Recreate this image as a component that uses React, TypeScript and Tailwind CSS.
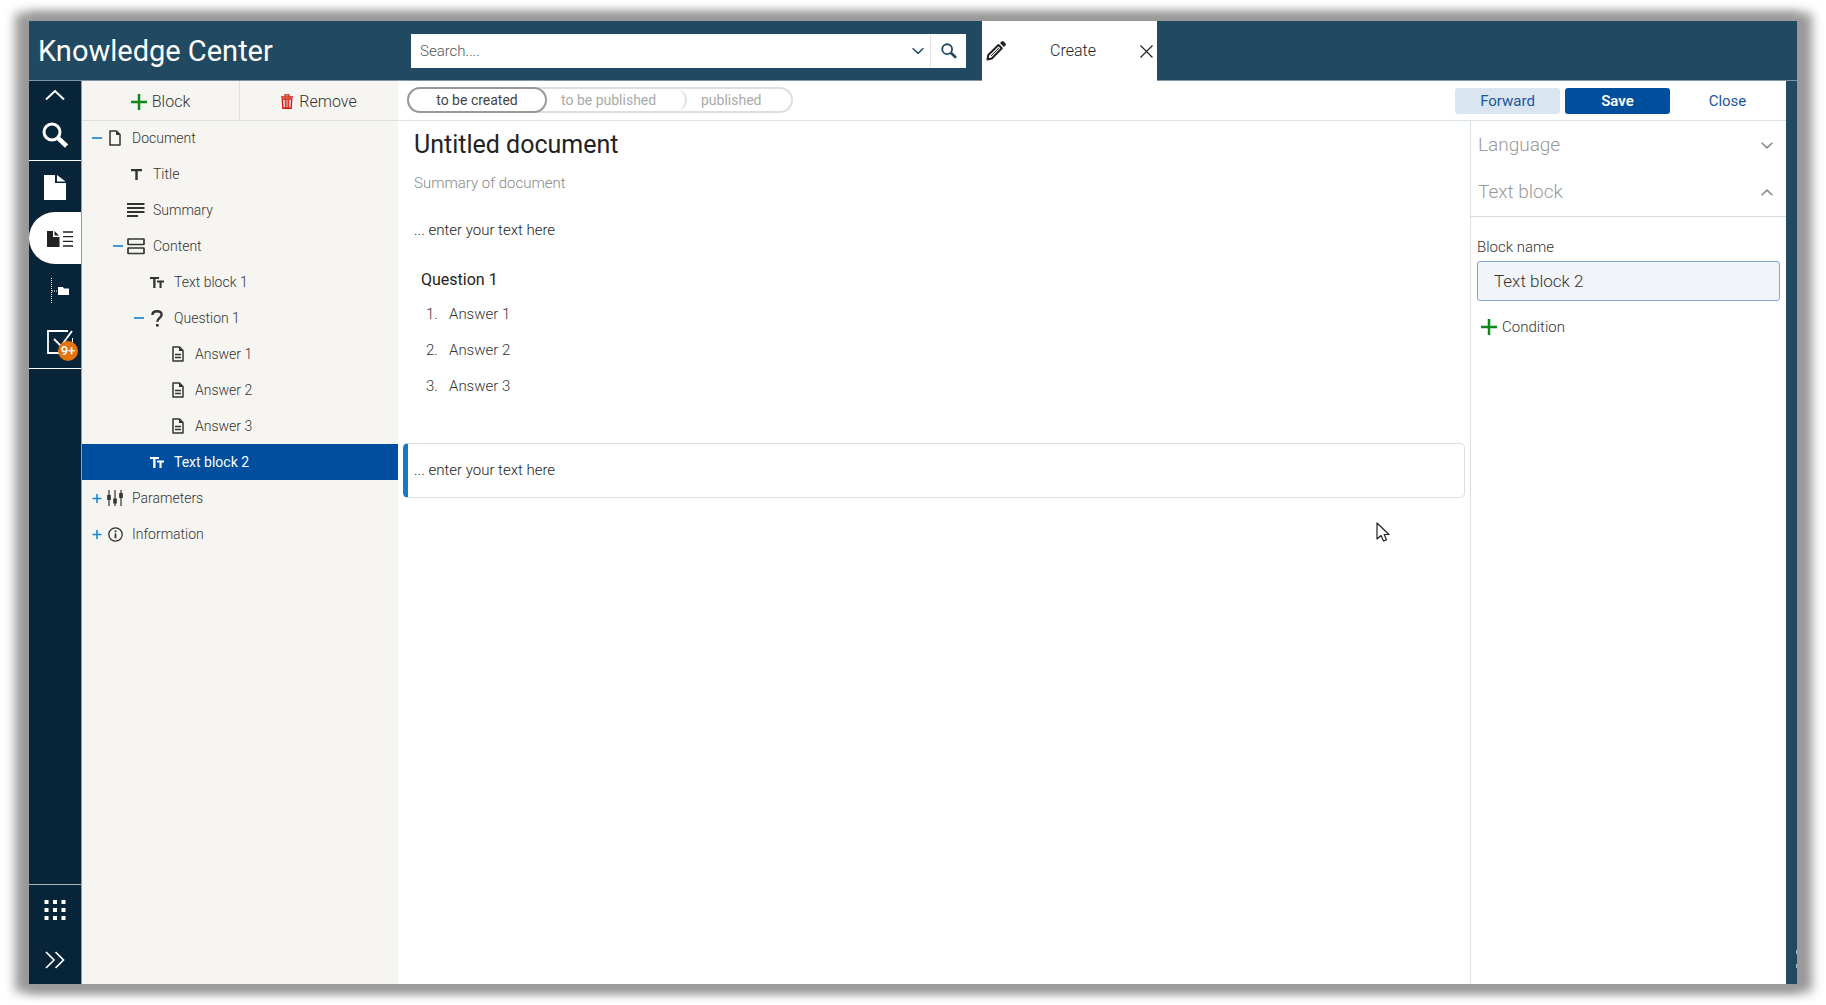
import type { ReactNode } from 'react'

type TreeNode = {
  label: string
  level: 0 | 1 | 2 | 3
  icon: ReactNode
  toggle?: 'open' | 'closed'
  active?: boolean
}

const indent = ['pl-[10px]', 'pl-[31px]', 'pl-[52px]', 'pl-[73px]']

/* ---------- Icons ---------- */

function Plus({ className, width = 2 }: { className?: string; width?: number }) {
  return (
    <svg className={className} viewBox="0 0 16 16" fill="none" stroke="currentColor" strokeWidth={width}>
      <path d="M8 0v16M0 8h16" />
    </svg>
  )
}

function Magnifier({ className }: { className?: string }) {
  return (
    <svg className={className} viewBox="0 0 26 26" fill="none" stroke="currentColor">
      <circle cx="10" cy="10" r="8" strokeWidth="3" />
      <path d="M16 16l8.5 8" strokeWidth="4.5" />
    </svg>
  )
}

function Chevron({ className, up, width = 1.5 }: { className?: string; up?: boolean; width?: number }) {
  return (
    <svg className={className} viewBox="0 0 20 10" fill="none" stroke="currentColor" strokeWidth={width}>
      <path d={up ? 'M1 9.5L10 1l9 8.5' : 'M1 .5L10 9l9-8.5'} />
    </svg>
  )
}

const PageIcon = () => (
  <svg className="h-4 w-3" viewBox="0 0 12 16" fill="none" stroke="currentColor" strokeWidth="1.5">
    <path d="M1 1h6.5L11 4.5V15H1z" strokeLinejoin="round" />
    <path d="M7 1v4h4z" fill="currentColor" stroke="none" />
  </svg>
)

const TitleIcon = () => (
  <svg className="h-[11px] w-[11px]" viewBox="0 0 11 11" fill="currentColor">
    <path d="M0 0h11v2.3H6.7V11H4.3V2.3H0z" />
  </svg>
)

const SummaryIcon = () => (
  <svg className="h-[14px] w-[18px]" viewBox="0 0 18 14" fill="none" stroke="currentColor" strokeWidth="1.8">
    <path d="M0 1h17.5M0 5h17.5M0 9h17.5M0 13h11" />
  </svg>
)

const ContentIcon = () => (
  <svg className="h-[17px] w-[18px]" viewBox="0 0 18 17" fill="none" stroke="currentColor" strokeWidth="1.7">
    <rect x="1" y="1" width="16" height="5.5" rx=".5" />
    <rect x="1" y="10" width="16" height="5.5" rx=".5" />
  </svg>
)

const TextIcon = () => (
  <svg className="h-[11px] w-[14px]" viewBox="0 0 14 11" fill="currentColor">
    <path d="M0 0h9v2H5.5v9H3.2V2H0z" />
    <path d="M7 3.5h7v1.9h-2.4V11H9.5V5.4H7z" />
  </svg>
)

const QuestionIcon = () => (
  <svg className="h-[17px] w-3" viewBox="0 0 12 17" fill="none" stroke="currentColor" strokeWidth="2.4">
    <path d="M1.4 5C1.4 2.6 3.4 1.3 6 1.3s4.6 1.2 4.6 3.5c0 3-4.3 3.3-4.3 7" />
    <path d="M5 14h2.7v2.6H5z" fill="currentColor" stroke="none" />
  </svg>
)

const AnswerIcon = () => (
  <svg className="h-4 w-3" viewBox="0 0 12 16" fill="none" stroke="currentColor" strokeWidth="1.5">
    <path d="M1 1h6.5L11 4.5V15H1z" strokeLinejoin="round" />
    <path d="M7 1v4h4z" fill="currentColor" stroke="none" />
    <path d="M3 8.5h6M3 11.5h6" strokeWidth="1.3" />
  </svg>
)

const SlidersIcon = () => (
  <svg className="h-4 w-4" viewBox="0 0 16 16" fill="none" stroke="currentColor">
    <path d="M2 0v16M8 0v16M14 0v16" strokeWidth="1.2" />
    <path d="M2 5v5M8 8.5v5M14 3v5" strokeWidth="3.6" />
  </svg>
)

const InfoIcon = () => (
  <svg className="h-[15px] w-[15px]" viewBox="0 0 15 15" fill="none" stroke="currentColor">
    <circle cx="7.5" cy="7.5" r="6.7" strokeWidth="1.3" />
    <path d="M7.5 6.5v4.8M7.5 3.5v1.8" strokeWidth="1.8" />
  </svg>
)

const TrashIcon = () => (
  <svg className="h-[15px] w-3" viewBox="0 0 12 15" fill="none" stroke="currentColor">
    <path d="M0 3h12" strokeWidth="1.5" />
    <path d="M4 2.5V.8h4v1.7" strokeWidth="1.2" />
    <path d="M1.3 5h9.4l-.6 9.3H1.9z" strokeWidth="1.4" />
    <path d="M4.3 5.5V14M7.7 5.5V14M6 5.5V14" strokeWidth="1.1" />
  </svg>
)

const PencilIcon = () => (
  <svg className="h-5 w-5" viewBox="0 0 20 20" fill="none" stroke="currentColor" strokeWidth="2">
    <path d="M1.5 18.5l.8-4.500L12.500 4l3.300 3.300L5.800 17.500z" strokeLinejoin="round" />
    <path d="M5 15l8-8" strokeWidth="1" />
    <path d="M14 2l1.500-1.400c.7-.6 1.500-.6 2.200 0l1.700 1.700c.6.7.6 1.500 0 2.200L18 6z" fill="currentColor" stroke="none" />
  </svg>
)

const tree: TreeNode[] = [
  { label: 'Document', level: 0, icon: <PageIcon />, toggle: 'open' },
  { label: 'Title', level: 1, icon: <TitleIcon /> },
  { label: 'Summary', level: 1, icon: <SummaryIcon /> },
  { label: 'Content', level: 1, icon: <ContentIcon />, toggle: 'open' },
  { label: 'Text block 1', level: 2, icon: <TextIcon /> },
  { label: 'Question 1', level: 2, icon: <QuestionIcon />, toggle: 'open' },
  { label: 'Answer 1', level: 3, icon: <AnswerIcon /> },
  { label: 'Answer 2', level: 3, icon: <AnswerIcon /> },
  { label: 'Answer 3', level: 3, icon: <AnswerIcon /> },
  { label: 'Text block 2', level: 2, icon: <TextIcon />, active: true },
  { label: 'Parameters', level: 0, icon: <SlidersIcon />, toggle: 'closed' },
  { label: 'Information', level: 0, icon: <InfoIcon />, toggle: 'closed' },
]

/* ---------- Sections ---------- */

function Header() {
  return (
    <header className="flex h-[60px] shrink-0 items-center bg-[#224962] shadow-[inset_0_-1px_0_#7f95a3]">
      <div className="w-[382px] shrink-0 pl-[9px] text-[29px] leading-8 font-normal text-white">Knowledge Center</div>

      <form className="flex h-[34px] w-[555px] shrink-0 bg-white" onSubmit={(e) => e.preventDefault()}>
        <input
          type="text"
          aria-label="Search"
          placeholder="Search...."
          className="min-w-0 flex-1 pl-[9px] text-[15px] font-light outline-none placeholder:text-[#555]"
        />
        <button type="button" aria-label="Search options" className="flex w-6 items-center justify-center text-[#224962]">
          <Chevron className="h-[6px] w-3" width={2.5} />
        </button>
        <button type="submit" aria-label="Run search" className="flex w-9 items-center justify-center border-l border-[#e4e4e4] text-[#224962]">
          <Magnifier className="h-4 w-4" />
        </button>
      </form>

      <div className="ml-4 flex h-full w-[175px] items-center bg-white pr-1 pl-1 text-[#222]">
        <PencilIcon />
        <button type="button" className="flex-1 text-base font-light">Create</button>
        <button type="button" aria-label="Close tab" className="flex w-[13px] justify-center">
          <svg className="h-[13px] w-[13px]" viewBox="0 0 13 13" fill="none" stroke="currentColor" strokeWidth="1.2">
            <path d="M.5.5l12 12M12.5.5l-12 12" />
          </svg>
        </button>
      </div>
    </header>
  )
}

function Rail() {
  return (
    <nav aria-label="Main" className="flex w-[53px] shrink-0 flex-col border-r border-[#8fa0ab] bg-[#082439] text-white">
      <button type="button" aria-label="Collapse" className="flex h-7 items-center justify-center">
        <Chevron up className="h-[10px] w-5" width={2} />
      </button>
      <button type="button" aria-label="Search" className="flex h-[51px] items-center justify-center">
        <Magnifier className="h-[26px] w-[26px]" />
      </button>
      <button type="button" aria-label="Documents" className="flex h-[52px] items-center justify-center border-t border-white pt-[2px]">
        <svg className="h-[25px] w-[22px]" viewBox="0 0 22 25" fill="currentColor">
          <path d="M0 0h11v8h11v17H0z" />
          <path d="M13 0v6.500h8.500z" />
        </svg>
      </button>
      <button type="button" aria-label="Document structure" className="flex h-[52px] items-center justify-center rounded-l-[26px] bg-white pt-[2px] pl-[10px] text-[#222]">
        <svg className="h-4 w-[26px]" viewBox="0 0 26 16" fill="currentColor">
          <path d="M0 0h6v6h6.500v10H0z" />
          <path d="M7.500 0v4.500H12z" />
          <path d="M16 1h10M16 5.700h10M16 10.300h10M16 15h10" fill="none" stroke="currentColor" strokeWidth="1.300" />
        </svg>
      </button>
      <button type="button" aria-label="Folders" className="flex h-[52px] items-center justify-center pt-[2px] pl-[10px]">
        <svg className="h-[26px] w-[18px]" viewBox="0 0 18 26" fill="none" stroke="currentColor">
          <path d="M.5 0v26M1 13h7" strokeDasharray="1 1" />
          <path d="M7 9h5l1 1.500h5V17H7z" fill="currentColor" stroke="none" />
        </svg>
      </button>
      <button type="button" aria-label="Tasks" className="relative flex h-[53px] items-center justify-center border-b border-white pl-[10px]">
        <svg className="h-6 w-[26px]" viewBox="0 0 26 24" fill="none" stroke="currentColor" strokeWidth="1.800">
          <path d="M21 1H1v22h21.500V15" />
          <path d="M7 9l7 7L25 1" />
          <path d="M25.500 8v5" strokeWidth="1" />
        </svg>
        <span className="absolute top-[25px] left-[29px] flex h-5 w-5 items-center justify-center rounded-full bg-[#e4730d] text-[13px] font-medium">
          9+
        </span>
      </button>

      <div className="flex-1" />

      <button type="button" aria-label="Apps" className="flex h-[51px] items-center justify-center border-t border-[#a9b5bd]">
        <svg className="h-[21px] w-[22px]" viewBox="0 0 22 21" fill="currentColor">
          {[0, 8, 16].map((y) => [0.5, 9, 17.5].map((x) => <rect key={`${x}-${y}`} x={x} y={y} width="4" height="4" />))}
        </svg>
      </button>
      <button type="button" aria-label="Expand" className="flex h-[49px] items-center justify-center">
        <svg className="h-[18px] w-5" viewBox="0 0 20 18" fill="none" stroke="currentColor" strokeWidth="1.700">
          <path d="M1 1l8 8-8 8M10.500 1l8 8-8 8" />
        </svg>
      </button>
    </nav>
  )
}

function Sidebar() {
  return (
    <aside className="flex w-[316px] shrink-0 flex-col bg-[#f7f5f1] text-[#333]">
      <div className="grid h-[39px] grid-cols-2 text-base font-light shadow-[0_1px_0_#dbe2e5]">
        <button type="button" className="flex items-center justify-center gap-[5px] border-r border-[#dbe2e5] pt-[2px]">
          <Plus className="h-4 w-4 text-[#0c8a1c]" width={2.5} />
          Block
        </button>
        <button type="button" className="flex items-center justify-center gap-[6px] pt-[2px]">
          <span className="text-[#d3180c]"><TrashIcon /></span>
          Remove
        </button>
      </div>

      <ul>
        {tree.map((node) => (
          <li key={node.label}>
            <button
              type="button"
              className={`flex h-9 w-full items-center text-sm ${indent[node.level]} ${
                node.active ? 'bg-[#004e9e] font-normal text-white' : 'font-light'
              }`}
            >
              <span className="mr-1 flex w-[10px] shrink-0 items-center text-[#1b85d0]">
                {node.toggle === 'open' && <span className="h-[2px] w-full bg-[#3f97d6]" />}
                {node.toggle === 'closed' && <Plus className="h-[9px] w-[10px]" width={2.8} />}
              </span>
              <span className="mr-2 flex w-[18px] shrink-0 items-center justify-center">{node.icon}</span>
              {node.label}
            </button>
          </li>
        ))}
      </ul>
    </aside>
  )
}

function Toolbar() {
  return (
    <div className="relative flex h-[39px] shrink-0 items-center justify-between pr-[6px] pl-[9px] shadow-[0_1px_0_#dbe2e5]">
      <ol className="mb-[2px] flex h-[26px] items-center rounded-full border-2 border-[#dedede] text-sm text-[#aaa]">
        <li className="-ml-[2px] flex h-[26px] w-[140px] items-center justify-center rounded-full border-2 border-[#999] text-[#444]">
          to be created
        </li>
        <li className="flex h-[22px] w-[140px] items-center rounded-r-full border-r-2 border-[#dedede] pl-[14px]">to be published</li>
        <li className="w-[104px] pl-[14px]">published</li>
      </ol>

      <div className="flex gap-[5px] text-[15px] leading-5 text-[#1a56a0]">
        <button type="button" className="h-[26px] w-[105px] rounded-[3px] bg-[#d9e5f1]">Forward</button>
        <button type="button" className="h-[26px] w-[105px] rounded-[3px] bg-[#004e9e] font-semibold text-white">Save</button>
        <button type="button" className="h-[26px] w-[105px]">Close</button>
      </div>
    </div>
  )
}

function Editor() {
  return (
    <main className="relative min-w-0 flex-1 px-[5px] pt-px text-[15px] font-light text-[#222]">
      <div className="pl-[11px]">
        <h1 className="pt-2 text-[25px] leading-8 font-normal text-[#222]">Untitled document</h1>
        <p className="mt-3 leading-5 text-[#888]">Summary of document</p>
        <p className="mt-[27px] leading-5">... enter your text here</p>

        <section className="mt-[30px] pl-[7px]">
          <h2 className="text-base leading-5 font-normal text-[#222]">Question 1</h2>
          <ol className="mt-[6px] text-[#333]">
            {[1, 2, 3].map((n) => (
              <li key={n} className="flex h-9 items-center pl-[5px]">
                <span className="w-[23px]">{n}.</span>
                <span>Answer {n}</span>
              </li>
            ))}
          </ol>
        </section>
      </div>

      <div className="mt-[39px] flex h-[55px] items-center rounded-[5px] border border-l-[5px] border-[#dedede] border-l-[#1479c9] pl-[6px]">
        ... enter your text here
      </div>

      {/* mouse pointer */}
      <svg className="absolute top-[402px] right-[80px] h-5 w-[14px]" viewBox="0 0 14 20" fill="#fff" stroke="#222" strokeWidth="1.200">
        <path d="M1 1v16l4-3.500L7.500 19l3-1.300-2.400-5.200H13z" strokeLinejoin="round" />
      </svg>
    </main>
  )
}

function Properties() {
  return (
    <aside className="w-[316px] shrink-0 border-l border-[#dbe2e5] pt-px text-[#333]">
      <button type="button" className="flex h-12 w-full items-center justify-between pr-[13px] pl-[7px] text-[19px] font-light text-[#999]">
        Language
        <Chevron className="h-[7px] w-3 text-[#888]" width={2.5} />
      </button>
      <button type="button" className="flex h-12 w-full items-center justify-between border-b border-[#d3dcdf] pr-[13px] pl-[7px] text-[19px] font-light text-[#999]">
        Text block
        <Chevron up className="h-[7px] w-3 text-[#888]" width={2.5} />
      </button>

      <div className="px-[6px] pt-5 font-light">
        <label htmlFor="block-name" className="block text-[15px] leading-5">Block name</label>
        <input
          id="block-name"
          type="text"
          defaultValue="Text block 2"
          className="mt-1 h-10 w-full rounded-[3px] border border-[#7fa6d3] bg-[#f1f5fa] pl-4 text-[17px] outline-none"
        />
        <button type="button" className="mt-[14px] flex items-center gap-[5px] pl-1 text-[15px] leading-6">
          <Plus className="h-4 w-4 text-[#0c8a1c]" width={2.5} />
          Condition
        </button>
      </div>
    </aside>
  )
}

export default function App() {
  return (
    <div className="h-screen overflow-hidden bg-white px-[29px] py-[21px] font-['Roboto',sans-serif]">
      <div className="flex h-full flex-col shadow-[-6px_0_10px_8px_#999,7px_0_10px_8px_#999]">
        <Header />
        <div className="flex min-h-0 flex-1">
          <Rail />
          <Sidebar />
          <div className="flex min-w-0 flex-1 flex-col bg-white">
            <Toolbar />
            <div className="flex min-h-0 flex-1">
              <Editor />
              <Properties />
            </div>
          </div>
          <div className="flex w-[11px] shrink-0 flex-col items-end justify-end gap-[10px] bg-[#224962] pb-4">
            <span className="h-1 w-px bg-[#a9b5bd]" />
            <span className="h-1 w-px bg-[#a9b5bd]" />
          </div>
        </div>
      </div>
    </div>
  )
}
